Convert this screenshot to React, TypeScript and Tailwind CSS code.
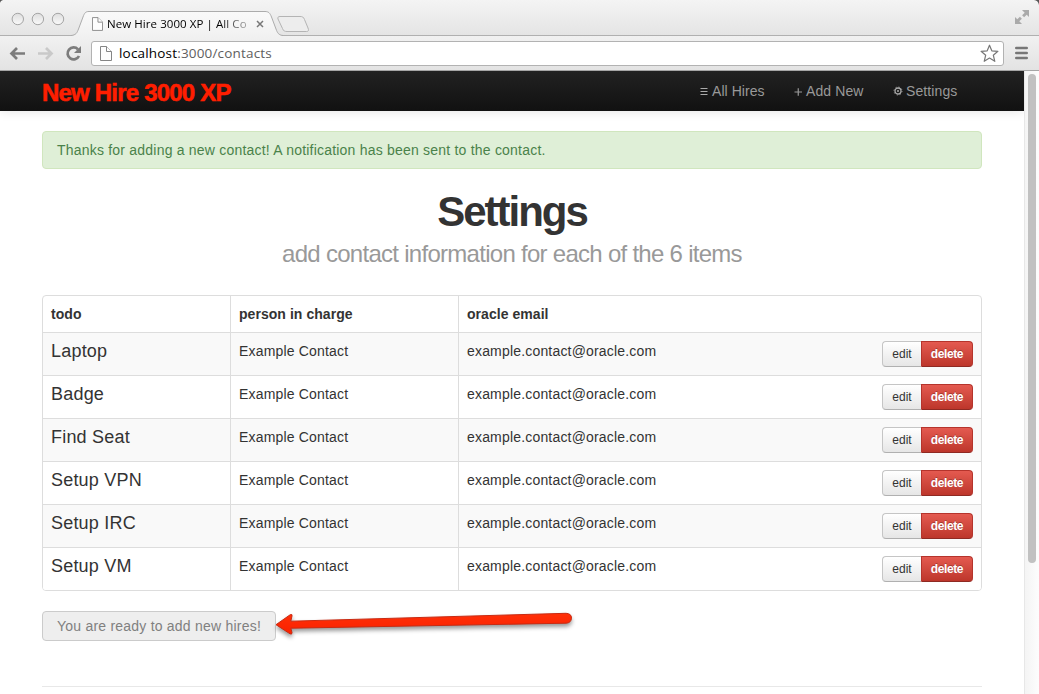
import React from "react";

const items = ["Laptop", "Badge", "Find Seat", "Setup VPN", "Setup IRC", "Setup VM"];

function PageIcon({ className }: { className: string }) {
  return (
    <svg className={className} viewBox="0 0 12 15" fill="#fdfdfd" stroke="#858585" strokeWidth="1">
      <path d="M.5.5h6l5 5v9H.5z" />
      <path d="M6.5.5v5h5" />
    </svg>
  );
}

function TabStrip() {
  return (
    <div className="relative h-9 shrink-0 bg-linear-to-b from-[#f4f4f4] to-[#e4e4e4]">
      <svg className="absolute inset-0" width="1039" height="36" viewBox="0 0 1039 36" fill="none">
        <defs>
          <linearGradient id="tab" x1="0" y1="0" x2="0" y2="1">
            <stop offset="0" stopColor="#fafafa" />
            <stop offset="1" stopColor="#f1f1f1" />
          </linearGradient>
          <linearGradient id="light" x1="0" y1="0" x2="0" y2="1">
            <stop offset="0" stopColor="#dedede" />
            <stop offset="1" stopColor="#fafafa" />
          </linearGradient>
        </defs>
        <path d="M0 35.5H1039" stroke="#b0b0b0" />
        <path d="M71 36C76 35 77 33 78.500 29L83 17C84.500 13 85.500 11.500 89 11.500H265C268.500 11.500 270 13 271.500 17L276 29C277.500 33 278.500 35 283 36Z" fill="url(#tab)" />
        <path d="M71 35.500C76 35 77 33 78.500 29L83 17C84.500 13 85.500 11.500 89 11.500H265C268.500 11.500 270 13 271.500 17L276 29C277.500 33 278.500 35 283 35.500" stroke="#acacac" />
        <path d="M280 16.500H300C302.500 16.500 303.500 17 304.500 19.500L308 28C309 30.500 308.500 31.500 306.500 31.500H287C284.500 31.500 283.500 31 282.500 28.500L278 19C277.500 17.500 278 16.500 280 16.500Z" fill="#ededed" stroke="#b4b4b4" />
        <g fill="url(#light)" stroke="#a5a5a5">
          <circle cx="17.800" cy="19" r="5.700" />
          <circle cx="37.900" cy="19" r="5.700" />
          <circle cx="58" cy="19" r="5.700" />
        </g>
        <path d="M257 21L263 27M263 21L257 27" stroke="#777" strokeWidth="1.500" />
        <path d="M1022 10h7v7l-2.300-2.300-2.600 2.600-2-2 2.600-2.600zM1015 17l2.300 2.300 2.600-2.600 2 2-2.600 2.600L1022 24h-7z" fill="#aaa" />
        <path d="M0 0H3C1.500 .3 .3 1.500 0 3ZM1039 0H1034C1037 .5 1038.500 2 1039 5Z" fill="#555" />
      </svg>
      <div className="relative flex h-9 items-start pt-[17px] pl-[92px]">
        <PageIcon className="h-[14px] w-[11px]" />
        <div className="ml-1 bg-linear-to-r from-black from-80% to-[#00000050] to-100% bg-clip-text font-['Open_Sans','Noto_Sans',sans-serif] text-[11.5px] leading-[14px] font-medium tracking-[0.07px] whitespace-nowrap text-transparent">
          New Hire 3000 XP | All Co
        </div>
      </div>
    </div>
  );
}

function Toolbar() {
  return (
    <div className="flex h-[35px] shrink-0 items-center border-b border-[#a6a6a6] bg-linear-to-b from-[#f1f1f1] to-[#e3e3e3]">
      <svg className="shrink-0" width="91" height="34" viewBox="0 0 91 34" fill="none">
        <path d="M25 17.500H12M17 12L11.500 17.500L17 23" stroke="#7c7c7c" strokeWidth="2.700" />
        <path d="M38 17.500H51M46 12L51.500 17.500L46 23" stroke="#c9c9c9" strokeWidth="2.700" />
        <path d="M78 13.300A6 6 0 1 0 79 20" stroke="#7c7c7c" strokeWidth="2.700" />
        <path d="M81 10V17H74Z" fill="#7c7c7c" />
      </svg>
      <div className="flex h-[25px] w-[913px] items-center rounded-[3px] border border-[#b2b2b2] bg-white px-2">
        <PageIcon className="h-[15px] w-3" />
        <div className="ml-[7px] flex-1 font-['Open_Sans','Noto_Sans',sans-serif] text-[13.5px] leading-4 tracking-[0.18px] text-[#606060]">
          <span className="text-black">localhost</span>:3000/contacts
        </div>
        <svg className="-mr-[4px]" width="19" height="19" viewBox="0 0 19 19" fill="#fff" stroke="#777" strokeWidth="1.200" strokeLinejoin="round">
          <path d="M9.500 1.200L11.800 6.800L17.900 7.300L13.300 11.200L14.800 17.300L9.500 14.100L4.200 17.300L5.700 11.200L1.100 7.300L7.200 6.800Z" />
        </svg>
      </div>
      <svg className="ml-[11px]" width="13" height="14" viewBox="0 0 13 14" stroke="#777" strokeWidth="2.600" strokeLinecap="round">
        <path d="M1.300 2H11.700M1.300 7H11.700M1.300 12H11.700" />
      </svg>
    </div>
  );
}

function NavBar() {
  return (
    <nav className="flex h-10 items-center bg-linear-to-b from-[#222] to-[#111] pl-[42px] text-[14px] leading-5 text-[#999] shadow-[0_1px_10px_rgba(0,0,0,0.1)]">
      <div className="w-[658px] pt-[3px] text-[24px] font-bold tracking-[-0.8px] whitespace-nowrap text-[#ff1e00] [-webkit-text-stroke:0.6px_#ff1e00]">New Hire 3000 XP</div>
      <div className="flex w-[94px] items-center">
        <svg className="mr-[4px]" width="8" height="9" viewBox="0 0 8 9" stroke="#aaa" strokeWidth="1.100"><path d="M.5 1.500H7.500M.5 4.500H7.500M.5 7.500H7.500" /></svg>
        <span className="tracking-[0.05px]">All Hires</span>
      </div>
      <div className="flex w-[99px] items-center">
        <svg className="mr-[3px]" width="9" height="9" viewBox="0 0 9 9" stroke="#999" strokeWidth="1.200"><path d="M.5 5H8M4.250 1.200V8.800" /></svg>
        <span className="tracking-[0.1px]">Add New</span>
      </div>
      <div className="flex items-center">
        <svg className="mr-[3px]" width="10" height="10" viewBox="0 0 10 10" fill="none" stroke="#aaa">
          <circle cx="5" cy="5" r="3" strokeWidth="1.300" />
          <circle cx="5" cy="5" r="4" strokeWidth=".9" strokeDasharray="1.200 1.942" />
          <circle cx="5" cy="5" r="1" fill="#aaa" stroke="none" />
        </svg>
        <span className="tracking-[0.1px]">Settings</span>
      </div>
    </nav>
  );
}

function RowActions() {
  return (
    <div className="flex text-[12px] leading-5">
      <button className="h-[26px] w-[39px] rounded-l-[4px] border border-r-0 border-[#c5c5c5] border-b-[#b0b0b0] bg-linear-to-b from-white to-[#e6e6e6] tracking-normal text-[#333]">edit</button>
      <button className="h-[26px] w-[52px] rounded-r-[4px] border border-[#b5342c] border-b-[#8f2a23] bg-linear-to-b from-[#e45a50] to-[#bd362b] font-bold tracking-[-0.4px] text-white [text-shadow:0_-1px_0_rgba(0,0,0,0.25)]">delete</button>
    </div>
  );
}

function HiresTable() {
  return (
    <div className="mt-[23px] h-[296px] overflow-hidden rounded-[4px] border border-[#ddd] text-[14px] leading-5 tracking-[0.18px]">
      <div className="grid h-9 grid-cols-[187px_228px_1fr] font-bold tracking-[0.05px]">
        <div className="px-2 pt-2">todo</div>
        <div className="border-l border-[#ddd] px-2 pt-2">person in charge</div>
        <div className="border-l border-[#ddd] px-2 pt-2">oracle email</div>
      </div>
      {items.map((item, i) => (
        <div key={item} className={"grid h-[43px] grid-cols-[187px_228px_1fr] border-t border-[#ddd] " + (i % 2 === 0 ? "bg-[#f9f9f9]" : "bg-white")}>
          <div className="px-2 pt-2 text-[18px] leading-5 tracking-[0.2px]">{item}</div>
          <div className="border-l border-[#ddd] px-2 pt-2">Example Contact</div>
          <div className="flex justify-between border-l border-[#ddd] px-2 pt-2">
            <span>example.contact@oracle.com</span>
            <RowActions />
          </div>
        </div>
      ))}
    </div>
  );
}

function Arrow() {
  return (
    <svg className="-ml-px overflow-visible" width="300" height="30" viewBox="0 0 300 30">
      <defs>
        <linearGradient id="red" x1="0" y1="0" x2="0" y2="1">
          <stop offset="0" stopColor="#ff3008" />
          <stop offset="1" stopColor="#fa2100" />
        </linearGradient>
      </defs>
      <path className="[filter:drop-shadow(0_3px_2px_rgba(0,0,0,0.4))]" d="M1 13.700L15.500 3.500Q17.500 3 17 5L15.800 10.200L291 2.300Q296.500 2.500 296.500 7.200Q296 12 291 12.200L15.800 17.200L17 21.500Q17 24 15 22.800Z" fill="url(#red)" stroke="#c82a12" strokeWidth="1" strokeLinejoin="round" />
    </svg>
  );
}

export default function App() {
  return (
    <div className="flex h-[694px] w-[1039px] flex-col overflow-hidden bg-white font-['Liberation_Sans',Arial,sans-serif] text-[#333]">
      <TabStrip />
      <Toolbar />
      <div className="flex min-h-0 flex-1">
        <div className="w-[1024px] overflow-hidden">
          <NavBar />
          <main className="mx-auto w-[940px] pt-5">
            <div className="h-[38px] rounded-[4px] border border-[#d0e6be] bg-[#dfefd7] px-[14px] pt-2 text-[14px] leading-5 tracking-[0.21px] text-[#4a824a]">
              Thanks for adding a new contact! A notification has been sent to the contact.
            </div>
            <h1 className="mt-[22px] text-center text-[42px] leading-[42px] font-bold tracking-[-2px]">Settings</h1>
            <h2 className="mt-[3px] text-center text-[24px] leading-9 tracking-[-0.72px] text-[#999]">add contact information for each of the 6 items</h2>
            <HiresTable />
            <div className="mt-5 flex h-[30px]">
              <div className="w-[234px] rounded-[4px] border border-[#cbcbcb] bg-[#eee] text-center text-[14px] leading-[28px] tracking-[0.22px] text-[#808080]">You are ready to add new hires!</div>
              <Arrow />
            </div>
            <hr className="mt-[45px] border-t border-[#e8e8e8]" />
          </main>
        </div>
        <div className="w-[15px] border-l border-[#e7e7e7] bg-linear-to-r from-[#f4f4f4] to-[#fdfdfd] pt-[3px] pl-[3px]">
          <div className="h-[489px] w-2 rounded-full bg-[#c1c1c1]" />
        </div>
      </div>
    </div>
  );
}
